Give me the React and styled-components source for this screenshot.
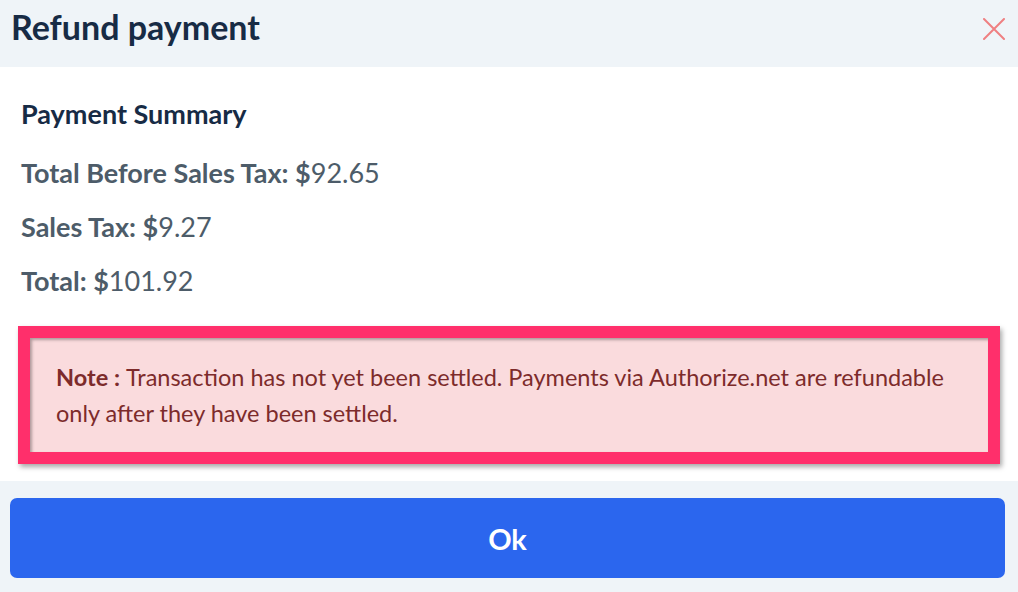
import React from "react";
import styled, { createGlobalStyle } from "styled-components";

const Global = createGlobalStyle`
  html, body { margin: 0; padding: 0; background: #ffffff; }
  body { font-family: Lato, "Open Sans", sans-serif; }
  * { box-sizing: border-box; }
`;

const Modal = styled.div`
  width: 1018px;
  height: 592px;
  display: flex;
  flex-direction: column;
  background: #ffffff;
  font-family: Lato, sans-serif;
`;

const Header = styled.div`
  height: 67px;
  flex: none;
  background: #eff4f8;
  display: flex;
  align-items: center;
  justify-content: space-between;
  padding: 0 12px 13px 11px;
`;

const Title = styled.h1`
  margin: 0;
  font-size: 34px;
  font-weight: 700;
  color: #172b45;
  line-height: 1;
`;

const CloseBtn = styled.button`
  border: none;
  background: none;
  padding: 0;
  width: 24px;
  height: 24px;
  display: flex;
  align-items: center;
  justify-content: center;
  margin-top: 4px;
  cursor: pointer;
`;

const Body = styled.div`
  flex: 1;
  padding: 32px 18px 0 18px;
  display: flex;
  flex-direction: column;
`;

const SectionTitle = styled.h2`
  margin: 0 0 0 3px;
  font-size: 27px;
  font-weight: 700;
  color: #172b45;
  line-height: 30px;
`;

const SummaryList = styled.div`
  display: flex;
  flex-direction: column;
  gap: 24px;
  margin: 29px 0 0 3px;
`;

const Line = styled.div`
  font-size: 27px;
  line-height: 30px;
  color: #4d5c69;
`;

const Label = styled.span`
  font-weight: 700;
`;

const NoteBox = styled.div`
  margin-top: 30px;
  border: 12px solid #ff2f6b;
  background: #fadbdd;
  padding: 21px 26px 21px 26px;
  box-shadow: 2px 3px 5px rgba(0, 0, 0, 0.35), inset 2px 2px 3px rgba(0, 0, 0, 0.3);
  font-size: 23.5px;
  line-height: 36px;
  color: #7d2b2b;
`;

const NoteLabel = styled.strong`
  font-weight: 700;
  margin-right: 6px;
`;

const Footer = styled.div`
  height: 111px;
  flex: none;
  background: #eff4f8;
  padding: 17px 13px 14px 10px;
  display: flex;
`;

const OkButton = styled.button`
  flex: 1;
  border: none;
  border-radius: 7px;
  background: #2b66ee;
  color: #ffffff;
  font-family: Lato, sans-serif;
  font-size: 29px;
  font-weight: 700;
  cursor: pointer;
`;

export default function App() {
  return (
    <>
      <Global />
      <Modal>
        <Header>
          <Title>Refund payment</Title>
          <CloseBtn aria-label="Close">
            <svg width="22" height="22" viewBox="0 0 22 22">
              <path d="M1 1 L21 21 M21 1 L1 21" stroke="#ef7f82" strokeWidth="2" strokeLinecap="round" />
            </svg>
          </CloseBtn>
        </Header>
        <Body>
          <SectionTitle>Payment Summary</SectionTitle>
          <SummaryList>
            <Line><Label>Total Before Sales Tax: $</Label>92.65</Line>
            <Line><Label>Sales Tax: $</Label>9.27</Line>
            <Line><Label>Total: $</Label>101.92</Line>
          </SummaryList>
          <NoteBox>
            <NoteLabel>Note :</NoteLabel>Transaction has not yet been settled. Payments via Authorize.net are refundable only after they have been settled.
          </NoteBox>
        </Body>
        <Footer>
          <OkButton>Ok</OkButton>
        </Footer>
      </Modal>
    </>
  );
}
